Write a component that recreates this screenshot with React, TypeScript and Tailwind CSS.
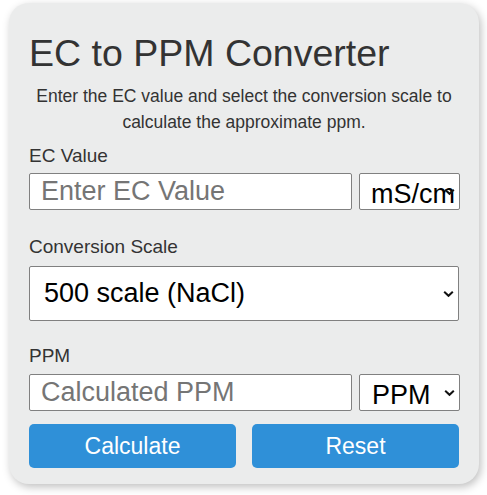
import React from 'react';

const Chevron = () => (
  <svg
    className="pointer-events-none absolute right-[5px] top-1/2 -translate-y-1/2"
    width="11"
    height="7"
    viewBox="0 0 11 7"
    fill="none"
  >
    <path d="M1.2 1.2 L5.5 5.3 L9.8 1.2" stroke="#111" strokeWidth="2" />
  </svg>
);

const App = () => {
  return (
    <div className="min-h-[495px] bg-white pt-[3px] pl-[9px] font-['Liberation_Sans',Arial,sans-serif]">
      <div className="converter-card w-[470px] rounded-[20px] bg-[#ebecec] px-5 pb-[16px] pt-[28px] text-[#333] shadow-[2px_3px_8px_rgba(0,0,0,0.25)]">
        {/* Heading */}
        <h1 className="text-[37.5px] leading-[44px] font-normal">EC to PPM Converter</h1>
        <p className="mt-[8px] text-center text-[17.5px] leading-[26px]">
          Enter the EC value and select the conversion scale to calculate the approximate ppm.
        </p>

        {/* EC value */}
        <label className="mt-[9px] block text-[19px] leading-[24px]">EC Value</label>
        <div className="mt-[5px] flex gap-[7px]">
          <input
            className="h-[37px] w-[323px] rounded-[2px] border border-[#808080] bg-white px-[11px] text-[27px] text-black placeholder:text-[#757575]"
            placeholder="Enter EC Value"
          />
          <div className="relative">
            <select className="h-[37px] w-[101px] appearance-none rounded-[2px] border border-[#808080] bg-white pl-[11px] text-[27px] text-black">
              <option>mS/cm</option>
              <option>µS/cm</option>
            </select>
            <Chevron />
          </div>
        </div>

        {/* Conversion scale */}
        <label className="mt-[25px] block text-[19px] leading-[24px]">Conversion Scale</label>
        <div className="relative mt-[7px]">
          <select className="h-[55px] w-full appearance-none rounded-[2px] border border-[#808080] bg-white pl-[14px] pr-2 text-[27px] text-black">
            <option>500 scale (NaCl)</option>
            <option>640 scale</option>
            <option>700 scale (KCl)</option>
          </select>
          <Chevron />
        </div>

        {/* PPM */}
        <label className="mt-[23px] block text-[19px] leading-[24px]">PPM</label>
        <div className="mt-[6px] flex gap-[7px]">
          <input
            className="h-[37px] w-[323px] rounded-[2px] border border-[#808080] bg-white px-[11px] text-[27px] text-black placeholder:text-[#757575]"
            placeholder="Calculated PPM"
            readOnly
          />
          <div className="relative">
            <select className="h-[37px] w-[101px] appearance-none rounded-[2px] border border-[#808080] bg-white pl-[12px] text-[27px] text-black">
              <option>PPM</option>
            </select>
            <Chevron />
          </div>
        </div>

        {/* Actions */}
        <div className="mt-[13px] flex justify-between">
          <button className="h-[44px] w-[207px] rounded-[5px] bg-[#2f90d8] text-[23px] text-white">Calculate</button>
          <button className="h-[44px] w-[207px] rounded-[5px] bg-[#2f90d8] text-[23px] text-white">Reset</button>
        </div>
      </div>
    </div>
  );
};

export default App;
